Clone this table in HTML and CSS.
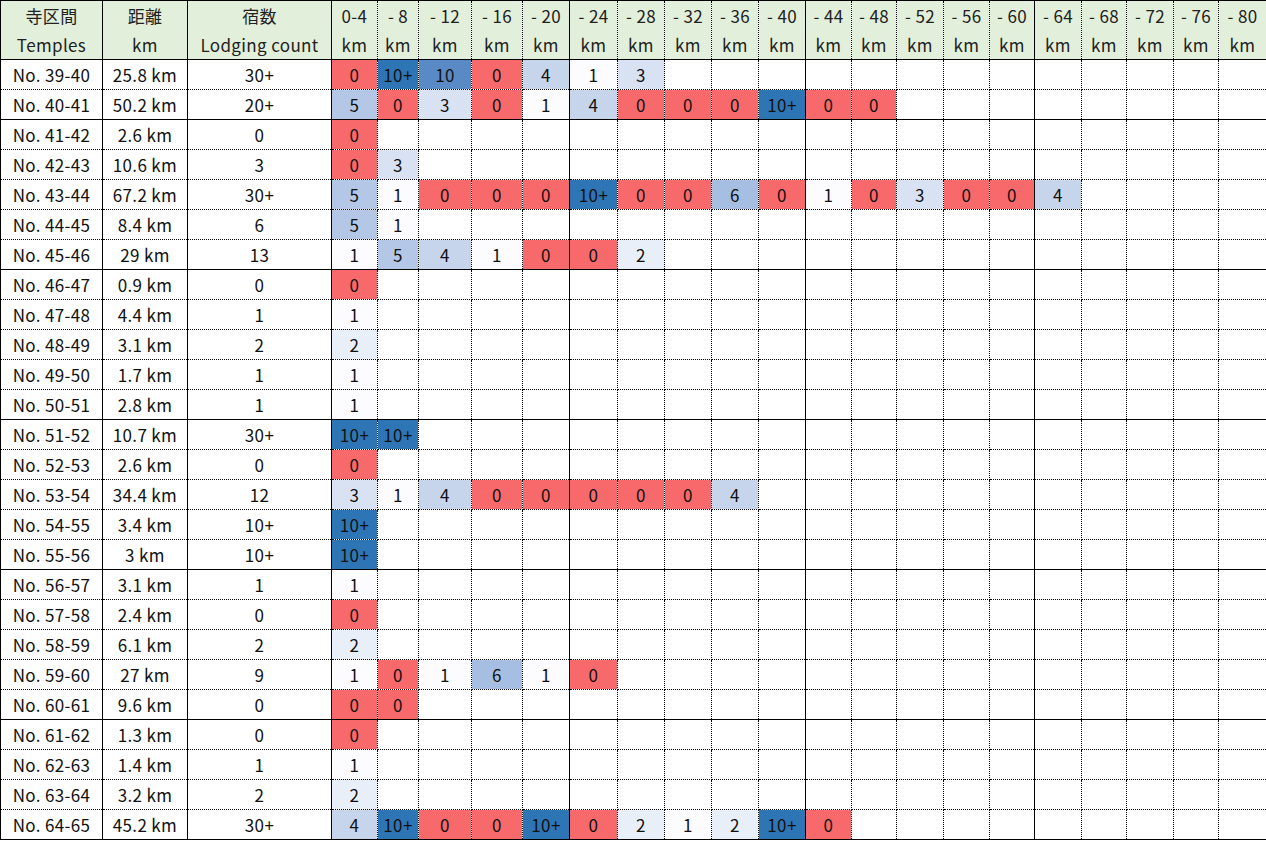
FILE: index.html
```html
<!DOCTYPE html>
<html lang="ja">
<head>
<meta charset="utf-8">
<title>Lodging counts</title>
<link rel="stylesheet" href="styles.css">
</head>
<body>
<table class="sheet">
<colgroup>
<col class="w-temple sep"><col class="w-dist sep"><col class="w-count sep">
<col class="w46"><col class="w41"><col class="w53"><col class="w51"><col class="w47 sep">
<col class="w48"><col class="w47"><col class="w47"><col class="w47"><col class="w47 sep">
<col class="w46"><col class="w45"><col class="w47"><col class="w46"><col class="w45 sep">
<col class="w47"><col class="w45"><col class="w47"><col class="w45"><col class="w48 sep">
</colgroup>
<thead>
<tr class="head">
<th>寺区間<br>Temples</th><th>距離<br>km</th><th>宿数<br>Lodging count</th>
<th>0-4<br>km</th><th>- 8<br>km</th><th>- 12<br>km</th><th>- 16<br>km</th><th>- 20<br>km</th>
<th>- 24<br>km</th><th>- 28<br>km</th><th>- 32<br>km</th><th>- 36<br>km</th><th>- 40<br>km</th>
<th>- 44<br>km</th><th>- 48<br>km</th><th>- 52<br>km</th><th>- 56<br>km</th><th>- 60<br>km</th>
<th>- 64<br>km</th><th>- 68<br>km</th><th>- 72<br>km</th><th>- 76<br>km</th><th>- 80<br>km</th>
</tr>
</thead>
<tbody>
<tr><td>No. 39-40</td><td>25.8 km</td><td>30+</td><td class="r">0</td><td class="x">10+</td><td class="b10">10</td><td class="r">0</td><td class="b4">4</td><td class="b1">1</td><td class="b3">3</td><td></td><td></td><td></td><td></td><td></td><td></td><td></td><td></td><td></td><td></td><td></td><td></td><td></td></tr>
<tr class="end"><td>No. 40-41</td><td>50.2 km</td><td>20+</td><td class="b5">5</td><td class="r">0</td><td class="b3">3</td><td class="r">0</td><td class="b1">1</td><td class="b4">4</td><td class="r">0</td><td class="r">0</td><td class="r">0</td><td class="x">10+</td><td class="r">0</td><td class="r">0</td><td></td><td></td><td></td><td></td><td></td><td></td><td></td><td></td></tr>
<tr><td>No. 41-42</td><td>2.6 km</td><td>0</td><td class="r">0</td><td></td><td></td><td></td><td></td><td></td><td></td><td></td><td></td><td></td><td></td><td></td><td></td><td></td><td></td><td></td><td></td><td></td><td></td><td></td></tr>
<tr><td>No. 42-43</td><td>10.6 km</td><td>3</td><td class="r">0</td><td class="b3">3</td><td></td><td></td><td></td><td></td><td></td><td></td><td></td><td></td><td></td><td></td><td></td><td></td><td></td><td></td><td></td><td></td><td></td><td></td></tr>
<tr><td>No. 43-44</td><td>67.2 km</td><td>30+</td><td class="b5">5</td><td class="b1">1</td><td class="r">0</td><td class="r">0</td><td class="r">0</td><td class="x">10+</td><td class="r">0</td><td class="r">0</td><td class="b6">6</td><td class="r">0</td><td class="b1">1</td><td class="r">0</td><td class="b3">3</td><td class="r">0</td><td class="r">0</td><td class="b4">4</td><td></td><td></td><td></td><td></td></tr>
<tr><td>No. 44-45</td><td>8.4 km</td><td>6</td><td class="b5">5</td><td class="b1">1</td><td></td><td></td><td></td><td></td><td></td><td></td><td></td><td></td><td></td><td></td><td></td><td></td><td></td><td></td><td></td><td></td><td></td><td></td></tr>
<tr class="end"><td>No. 45-46</td><td>29 km</td><td>13</td><td class="b1">1</td><td class="b5">5</td><td class="b4">4</td><td class="b1">1</td><td class="r">0</td><td class="r">0</td><td class="b2">2</td><td></td><td></td><td></td><td></td><td></td><td></td><td></td><td></td><td></td><td></td><td></td><td></td><td></td></tr>
<tr><td>No. 46-47</td><td>0.9 km</td><td>0</td><td class="r">0</td><td></td><td></td><td></td><td></td><td></td><td></td><td></td><td></td><td></td><td></td><td></td><td></td><td></td><td></td><td></td><td></td><td></td><td></td><td></td></tr>
<tr><td>No. 47-48</td><td>4.4 km</td><td>1</td><td class="b1">1</td><td></td><td></td><td></td><td></td><td></td><td></td><td></td><td></td><td></td><td></td><td></td><td></td><td></td><td></td><td></td><td></td><td></td><td></td><td></td></tr>
<tr><td>No. 48-49</td><td>3.1 km</td><td>2</td><td class="b2">2</td><td></td><td></td><td></td><td></td><td></td><td></td><td></td><td></td><td></td><td></td><td></td><td></td><td></td><td></td><td></td><td></td><td></td><td></td><td></td></tr>
<tr><td>No. 49-50</td><td>1.7 km</td><td>1</td><td class="b1">1</td><td></td><td></td><td></td><td></td><td></td><td></td><td></td><td></td><td></td><td></td><td></td><td></td><td></td><td></td><td></td><td></td><td></td><td></td><td></td></tr>
<tr class="end"><td>No. 50-51</td><td>2.8 km</td><td>1</td><td class="b1">1</td><td></td><td></td><td></td><td></td><td></td><td></td><td></td><td></td><td></td><td></td><td></td><td></td><td></td><td></td><td></td><td></td><td></td><td></td><td></td></tr>
<tr><td>No. 51-52</td><td>10.7 km</td><td>30+</td><td class="x">10+</td><td class="x">10+</td><td></td><td></td><td></td><td></td><td></td><td></td><td></td><td></td><td></td><td></td><td></td><td></td><td></td><td></td><td></td><td></td><td></td><td></td></tr>
<tr><td>No. 52-53</td><td>2.6 km</td><td>0</td><td class="r">0</td><td></td><td></td><td></td><td></td><td></td><td></td><td></td><td></td><td></td><td></td><td></td><td></td><td></td><td></td><td></td><td></td><td></td><td></td><td></td></tr>
<tr><td>No. 53-54</td><td>34.4 km</td><td>12</td><td class="b3">3</td><td class="b1">1</td><td class="b4">4</td><td class="r">0</td><td class="r">0</td><td class="r">0</td><td class="r">0</td><td class="r">0</td><td class="b4">4</td><td></td><td></td><td></td><td></td><td></td><td></td><td></td><td></td><td></td><td></td><td></td></tr>
<tr><td>No. 54-55</td><td>3.4 km</td><td>10+</td><td class="x">10+</td><td></td><td></td><td></td><td></td><td></td><td></td><td></td><td></td><td></td><td></td><td></td><td></td><td></td><td></td><td></td><td></td><td></td><td></td><td></td></tr>
<tr class="end"><td>No. 55-56</td><td>3 km</td><td>10+</td><td class="x">10+</td><td></td><td></td><td></td><td></td><td></td><td></td><td></td><td></td><td></td><td></td><td></td><td></td><td></td><td></td><td></td><td></td><td></td><td></td><td></td></tr>
<tr><td>No. 56-57</td><td>3.1 km</td><td>1</td><td class="b1">1</td><td></td><td></td><td></td><td></td><td></td><td></td><td></td><td></td><td></td><td></td><td></td><td></td><td></td><td></td><td></td><td></td><td></td><td></td><td></td></tr>
<tr><td>No. 57-58</td><td>2.4 km</td><td>0</td><td class="r">0</td><td></td><td></td><td></td><td></td><td></td><td></td><td></td><td></td><td></td><td></td><td></td><td></td><td></td><td></td><td></td><td></td><td></td><td></td><td></td></tr>
<tr><td>No. 58-59</td><td>6.1 km</td><td>2</td><td class="b2">2</td><td></td><td></td><td></td><td></td><td></td><td></td><td></td><td></td><td></td><td></td><td></td><td></td><td></td><td></td><td></td><td></td><td></td><td></td><td></td></tr>
<tr><td>No. 59-60</td><td>27 km</td><td>9</td><td class="b1">1</td><td class="r">0</td><td class="b1">1</td><td class="b6">6</td><td class="b1">1</td><td class="r">0</td><td></td><td></td><td></td><td></td><td></td><td></td><td></td><td></td><td></td><td></td><td></td><td></td><td></td><td></td></tr>
<tr class="end"><td>No. 60-61</td><td>9.6 km</td><td>0</td><td class="r">0</td><td class="r">0</td><td></td><td></td><td></td><td></td><td></td><td></td><td></td><td></td><td></td><td></td><td></td><td></td><td></td><td></td><td></td><td></td><td></td><td></td></tr>
<tr><td>No. 61-62</td><td>1.3 km</td><td>0</td><td class="r">0</td><td></td><td></td><td></td><td></td><td></td><td></td><td></td><td></td><td></td><td></td><td></td><td></td><td></td><td></td><td></td><td></td><td></td><td></td><td></td></tr>
<tr><td>No. 62-63</td><td>1.4 km</td><td>1</td><td class="b1">1</td><td></td><td></td><td></td><td></td><td></td><td></td><td></td><td></td><td></td><td></td><td></td><td></td><td></td><td></td><td></td><td></td><td></td><td></td><td></td></tr>
<tr><td>No. 63-64</td><td>3.2 km</td><td>2</td><td class="b2">2</td><td></td><td></td><td></td><td></td><td></td><td></td><td></td><td></td><td></td><td></td><td></td><td></td><td></td><td></td><td></td><td></td><td></td><td></td><td></td></tr>
<tr class="end"><td>No. 64-65</td><td>45.2 km</td><td>30+</td><td class="b4">4</td><td class="x">10+</td><td class="r">0</td><td class="r">0</td><td class="x">10+</td><td class="r">0</td><td class="b2">2</td><td class="b1">1</td><td class="b2">2</td><td class="x">10+</td><td class="r">0</td><td></td><td></td><td></td><td></td><td></td><td></td><td></td><td></td><td></td></tr>
</tbody>
</table>
</body>
</html>
```
FILE: styles.css
```css
html, body {
  margin: 0;
  padding: 0;
  background: #ffffff;
  overflow: hidden;
}

.sheet {
  border-collapse: collapse;
  table-layout: fixed;
  width: 1266px;
  font-family: "Noto Sans CJK JP", "Noto Sans", sans-serif;
  font-size: 17px;
  letter-spacing: 0.35px;
  color: #111111;
  border-top: 1px solid #000;
  border-left: 1px solid #000;
}

.sheet col { border-right: 1px dotted #000; }
.sheet col.sep { border-right: 1px solid #000; }

.w-temple { width: 102px; }
.w-dist { width: 85px; }
.w-count { width: 144px; }
.w41 { width: 41px; }
.w45 { width: 45px; }
.w46 { width: 46px; }
.w47 { width: 47px; }
.w48 { width: 48px; }
.w51 { width: 51px; }
.w53 { width: 53px; }

.sheet th,
.sheet td {
  padding: 0;
  text-align: center;
  vertical-align: middle;
  white-space: nowrap;
  overflow: hidden;
  border: 1px dotted #000;
  font-weight: normal;
}

.head th {
  background: #E2EFDA;
  height: 58px;
  line-height: 29px;
  border-bottom: 1px solid #000;
  color: #222;
}

.sheet tbody tr { height: 30px; }
.sheet td { line-height: 28px; }

.sheet tr.end td { border-bottom: 1px solid #000; }

.sheet td:nth-child(1),
.sheet td:nth-child(2),
.sheet td:nth-child(3),
.sheet td:nth-child(8),
.sheet td:nth-child(13),
.sheet td:nth-child(18),
.sheet th:nth-child(1),
.sheet th:nth-child(2),
.sheet th:nth-child(3),
.sheet th:nth-child(8),
.sheet th:nth-child(13),
.sheet th:nth-child(18) {
  border-right: 1px solid #000;
}

.r { background: #F8696B; }
.x { background: #2E75B6; }
.b10 { background: #5A8AC6; }
.b6 { background: #A5BEE2; }
.b5 { background: #B4C7E7; }
.b4 { background: #C6D5EC; }
.b3 { background: #D9E2F3; }
.b2 { background: #E9EFF8; }
.b1 { background: #FCFCFF; }
```
